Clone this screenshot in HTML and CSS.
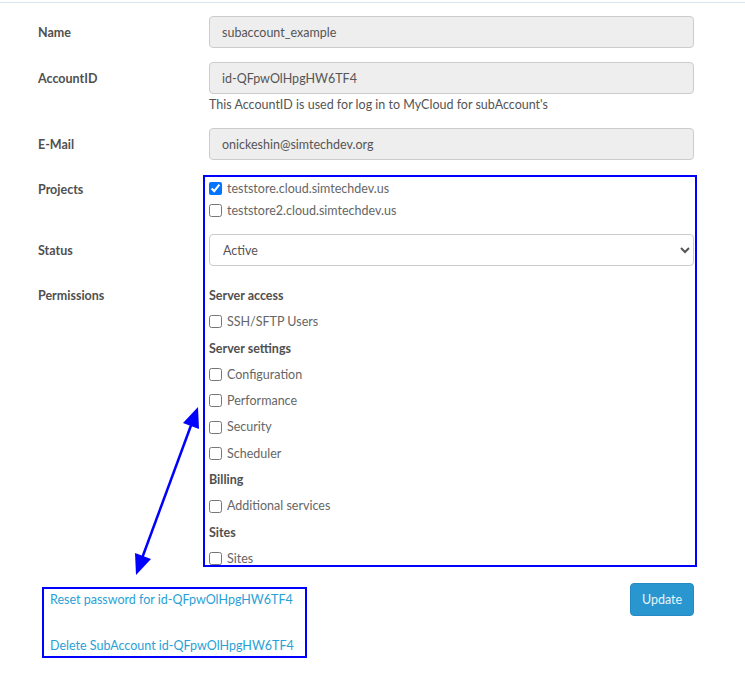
FILE: index.html
```html
<!DOCTYPE html>
<html lang="en">
<head>
    <meta charset="UTF-8">
    <meta name="viewport" content="width=device-width, initial-scale=1.0">
    <title>Edit SubAccount</title>
    <link rel="stylesheet" href="styles.css">
</head>
<body>
    <div class="page">
        <div class="topline"></div>

        <form class="sub-form">
            <label class="form-label row-name" for="name">Name</label>
            <div class="field row-name">
                <input type="text" id="name" class="form-control" value="subaccount_example" readonly>
            </div>

            <label class="form-label row-account" for="account_id">AccountID</label>
            <div class="field row-account">
                <input type="text" id="account_id" class="form-control" value="id-QFpwOlHpgHW6TF4" readonly>
                <div class="help-text">This AccountID is used for log in to MyCloud for subAccount's</div>
            </div>

            <label class="form-label row-email" for="email">E-Mail</label>
            <div class="field row-email">
                <input type="text" id="email" class="form-control" value="onickeshin@simtechdev.org" readonly>
            </div>

            <div class="form-label projects-label row-projects">Projects</div>
            <div class="field projects row-projects">
                <label class="check"><input type="checkbox" checked> teststore.cloud.simtechdev.us</label>
                <label class="check"><input type="checkbox"> teststore2.cloud.simtechdev.us</label>
            </div>

            <label class="form-label row-status" for="status">Status</label>
            <div class="field status row-status">
                <select id="status" class="form-select">
                    <option>Active</option>
                    <option>Disabled</option>
                </select>
            </div>

            <div class="form-label perm-label row-perms">Permissions</div>
            <div class="field permissions row-perms">
                <div class="perm-group">Server access</div>
                <label class="check"><input type="checkbox"> SSH/SFTP Users</label>
                <div class="perm-group">Server settings</div>
                <label class="check"><input type="checkbox"> Configuration</label>
                <label class="check"><input type="checkbox"> Performance</label>
                <label class="check"><input type="checkbox"> Security</label>
                <label class="check"><input type="checkbox"> Scheduler</label>
                <div class="perm-group">Billing</div>
                <label class="check"><input type="checkbox"> Additional services</label>
                <div class="perm-group">Sites</div>
                <label class="check"><input type="checkbox"> Sites</label>
            </div>

            <!-- highlight around projects / status / permissions -->
            <div class="mark-box"></div>
        </form>

        <div class="actions">
            <div class="links">
                <a href="#">Reset password for id-QFpwOlHpgHW6TF4</a>
                <a href="#">Delete SubAccount id-QFpwOlHpgHW6TF4</a>
            </div>
            <button type="button" class="btn-update">Update</button>
        </div>

        <svg class="arrow" width="745" height="689" viewBox="0 0 745 689">
            <line x1="193" y1="420" x2="141" y2="561" stroke="#0000ff" stroke-width="2.5"/>
            <polygon points="198,407 199,429 183,423" fill="#0000ff"/>
            <polygon points="136,575 135,553 151,559" fill="#0000ff"/>
        </svg>
    </div>
</body>
</html>
```

FILE: styles.css
```css
body {
    margin: 0;
    background: #fff;
    font-family: Lato, "Open Sans", Arial, sans-serif;
    font-size: 12.5px;
    color: #555;
}
.page {
    position: relative;
    width: 745px;
    height: 689px;
}
.topline {
    height: 2px;
    border-bottom: 1px solid #d9e5ef;
}
.sub-form {
    display: grid;
    grid-template-columns: 171px 485px;
    margin: 13px 0 0 38px;
}
.sub-form .form-label { grid-column: 1; }
.sub-form .field { grid-column: 2; }
.row-name { grid-row: 1; }
.row-account { grid-row: 2; }
.row-email { grid-row: 3; }
.row-projects { grid-row: 4; }
.row-status { grid-row: 5; }
.row-perms { grid-row: 6; }

.form-label {
    font-weight: bold;
    color: #505050;
    line-height: 32px;
    padding-top: 1px;
}
.field {
    margin-bottom: 14px;
}
.form-control {
    display: block;
    box-sizing: border-box;
    width: 100%;
    height: 32px;
    padding: 1px 12px 0;
    border: 1px solid #ccc;
    border-radius: 4px;
    background: #eee;
    font-family: inherit;
    font-size: 12.5px;
    color: #555;
    outline: none;
}
.help-text {
    margin-top: 2px;
    line-height: 18px;
    color: #555;
}
.projects-label {
    line-height: 22px;
    margin-top: 4px;
}
.projects {
    margin-top: 4px;
    margin-bottom: 12px;
}
.projects .check {
    line-height: 22px;
}
.check {
    display: flex;
    align-items: center;
    color: #666;
}
.check input {
    width: 13px;
    height: 13px;
    margin: 0 5px 1px 0;
}
.status {
    margin-bottom: 16px;
}
.form-select {
    display: block;
    box-sizing: border-box;
    width: 100%;
    height: 32px;
    padding: 1px 9px 0;
    border: 1px solid #ccc;
    border-radius: 4px;
    background: #fff;
    font-family: inherit;
    font-size: 12.5px;
    color: #555;
}
.perm-label {
    line-height: 26.3px;
}
.permissions {
    margin-top: 1px;
    margin-bottom: 0;
}
.permissions .check,
.perm-group {
    line-height: 26.3px;
}
.perm-group {
    font-weight: bold;
    color: #505050;
}
.mark-box {
    grid-column: 2;
    grid-row: 4 / 7;
    margin: 1px -3px 5px -6px;
    border: 2px solid #0000ff;
    pointer-events: none;
}
.actions {
    display: flex;
    justify-content: space-between;
    align-items: flex-start;
    width: 652px;
    margin: 15px 0 0 42px;
}
.links {
    display: flex;
    flex-direction: column;
    gap: 28px;
    width: 249px;
    padding: 2px 6px 1px;
    border: 2px solid #0000ff;
}
.links a {
    color: #2a9fd6;
    text-decoration: none;
    line-height: 18px;
    white-space: nowrap;
}
.btn-update {
    margin-top: -4px;
    width: 64px;
    height: 33px;
    border: 1px solid #2489c5;
    border-radius: 4px;
    background: #2a96d0;
    color: #e8f4fb;
    font-family: inherit;
    font-size: 12.5px;
}
.arrow {
    position: absolute;
    left: 0;
    top: 0;
    pointer-events: none;
}
```
